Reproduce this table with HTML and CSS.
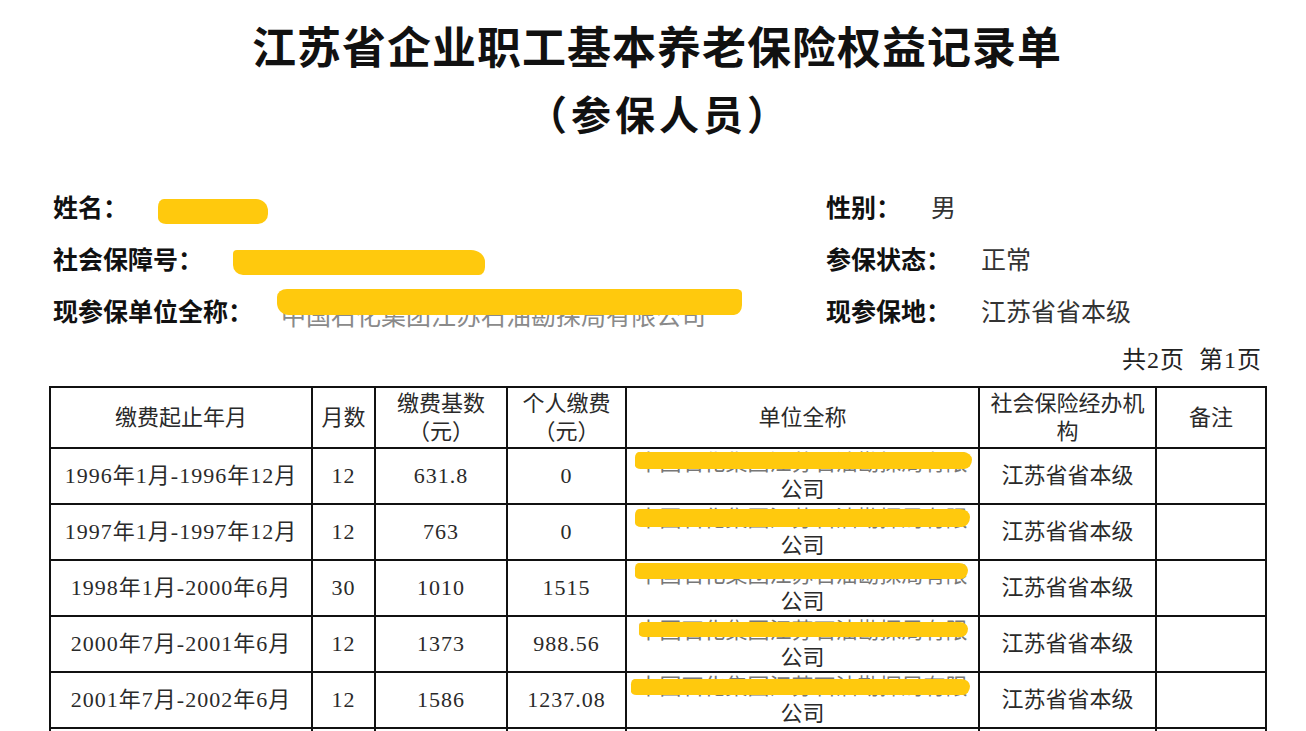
FILE: index.html
```html
<!DOCTYPE html>
<html lang="zh-CN">
<head>
<meta charset="utf-8">
<title>江苏省企业职工基本养老保险权益记录单</title>
<link rel="stylesheet" href="styles.css">
</head>
<body>
<div class="page">
  <h1 class="title">江苏省企业职工基本养老保险权益记录单</h1>
  <h2 class="subtitle">（参保人员）</h2>

  <div class="info">
    <div class="field"><span class="label">姓名：</span><span class="value"><span class="redact r-name"></span></span></div>
    <div class="field"><span class="label">性别：</span><span class="value">男</span></div>
    <div class="field"><span class="label">社会保障号：</span><span class="value"><span class="redact r-ssn"></span></span></div>
    <div class="field"><span class="label">参保状态：</span><span class="value">正常</span></div>
    <div class="field"><span class="label">现参保单位全称：</span><span class="value value-co"><span class="hidden-co">中国石化集团江苏石油勘探局有限公司</span></span></div>
    <div class="field"><span class="label">现参保地：</span><span class="value">江苏省省本级</span></div>
  </div>

  <div class="pages">共2页&nbsp;&nbsp;第1页</div>

  <table class="record">
    <colgroup>
      <col class="c1"><col class="c2"><col class="c3"><col class="c4"><col class="c5"><col class="c6"><col class="c7">
    </colgroup>
    <thead>
      <tr>
        <th>缴费起止年月</th>
        <th>月数</th>
        <th>缴费基数<br>（元）</th>
        <th>个人缴费<br>（元）</th>
        <th>单位全称</th>
        <th>社会保险经办机构</th>
        <th>备注</th>
      </tr>
    </thead>
    <tbody>
      <tr>
        <td class="num">1996年1月-1996年12月</td>
        <td class="num">12</td>
        <td class="num">631.8</td>
        <td class="num">0</td>
        <td class="co"><div class="co-line m1">中国石化集团江苏石油勘探局有限</div><div>公司</div></td>
        <td>江苏省省本级</td>
        <td></td>
      </tr>
      <tr>
        <td class="num">1997年1月-1997年12月</td>
        <td class="num">12</td>
        <td class="num">763</td>
        <td class="num">0</td>
        <td class="co"><div class="co-line m2">中国石化集团江苏石油勘探局有限</div><div>公司</div></td>
        <td>江苏省省本级</td>
        <td></td>
      </tr>
      <tr>
        <td class="num">1998年1月-2000年6月</td>
        <td class="num">30</td>
        <td class="num">1010</td>
        <td class="num">1515</td>
        <td class="co"><div class="co-line m3">中国石化集团江苏石油勘探局有限</div><div>公司</div></td>
        <td>江苏省省本级</td>
        <td></td>
      </tr>
      <tr>
        <td class="num">2000年7月-2001年6月</td>
        <td class="num">12</td>
        <td class="num">1373</td>
        <td class="num">988.56</td>
        <td class="co"><div class="co-line m4">中国石化集团江苏石油勘探局有限</div><div>公司</div></td>
        <td>江苏省省本级</td>
        <td></td>
      </tr>
      <tr>
        <td class="num">2001年7月-2002年6月</td>
        <td class="num">12</td>
        <td class="num">1586</td>
        <td class="num">1237.08</td>
        <td class="co"><div class="co-line m5">中国石化集团江苏石油勘探局有限</div><div>公司</div></td>
        <td>江苏省省本级</td>
        <td></td>
      </tr>
      <tr>
        <td class="num">2002年7月-2003年6月</td>
        <td class="num">12</td>
        <td class="num">1655</td>
        <td class="num">1323.60</td>
        <td class="co"><div class="co-line m1">中国石化集团江苏石油勘探局有限</div><div>公司</div></td>
        <td>江苏省省本级</td>
        <td></td>
      </tr>
    </tbody>
  </table>
</div>
</body>
</html>
```

FILE: styles.css
```css
* {
  box-sizing: border-box;
}

html, body {
  margin: 0;
  background: #ffffff;
}

body {
  color: #222222;
  font-family: "Liberation Serif", "Noto Sans CJK SC", serif;
  overflow: hidden;
  text-spacing-trim: space-all;
}

.page {
  width: 1306px;
  padding: 0 41px 0 49px;
}

.title {
  margin: 0;
  height: 90px;
  text-align: center;
  font: 700 44px/90px "Noto Sans CJK SC", sans-serif;
  letter-spacing: 1px;
  color: #111111;
}

.subtitle {
  margin: 0;
  height: 50px;
  text-align: center;
  font: 700 40px/46px "Noto Sans CJK SC", sans-serif;
  letter-spacing: 4px;
  padding-left: 4px;
  color: #111111;
}

.info {
  margin-top: 40px;
  padding-left: 4px;
  display: grid;
  grid-template-columns: 773px 1fr;
}

.field {
  display: flex;
  align-items: center;
  height: 52px;
  font-size: 25px;
  font-family: "Noto Sans CJK SC", sans-serif;
}

.label {
  font-weight: 700;
  color: #111111;
}

.value {
  margin-left: 30px;
  color: #333333;
  font-weight: 400;
}

.value-co {
  margin-left: 28px;
}

.redact {
  display: inline-block;
  height: 25px;
  background: #ffc90d;
  vertical-align: middle;
}

.r-name {
  width: 110px;
  border-radius: 6px 12px 10px 8px / 8px 12px 10px 6px;
  margin-top: 2px;
}

.r-ssn {
  width: 252px;
  border-radius: 4px 14px 6px 10px / 4px 12px 8px 10px;
}

.hidden-co {
  position: relative;
  display: inline-block;
  color: #8a8a8a;
  line-height: 34px;
  padding-top: 8px;
}

.hidden-co::after {
  content: "";
  position: absolute;
  left: -4px;
  right: -36px;
  top: 0;
  height: 26px;
  background: #ffc90d;
  border-radius: 10px 6px 8px 12px / 8px 4px 10px 12px;
}

.pages {
  height: 50px;
  line-height: 48px;
  text-align: right;
  padding-right: 3px;
  font-size: 24px;
  letter-spacing: 1px;
  color: #222222;
}

.record {
  border-collapse: collapse;
  table-layout: fixed;
  width: 1216px;
  font-size: 22px;
  color: #2a2a2a;
}

.c1 { width: 262px; }
.c2 { width: 63px; }
.c3 { width: 132px; }
.c4 { width: 119px; }
.c5 { width: 353px; }
.c6 { width: 177px; }
.c7 { width: 110px; }

.record th,
.record td {
  border: 2px solid #111111;
  text-align: center;
  vertical-align: middle;
  padding: 0 8px;
  font-weight: 400;
  line-height: 28px;
}

.record thead tr {
  height: 61px;
}

.record tbody tr {
  height: 55.6px;
}

.record td.num {
  letter-spacing: 1px;
  padding: 0 4px;
}

.record td.co {
  line-height: 27px;
  padding: 0 10px;
}

.co-line {
  position: relative;
  white-space: nowrap;
  color: #777777;
}

.co-line::after {
  content: "";
  position: absolute;
  left: -2px;
  right: -4px;
  top: 3px;
  height: 17px;
  background: #ffc90d;
  border-radius: 4px 10px 8px 6px / 6px 8px 10px 4px;
}

.co-line.m2::after {
  top: 4px;
  height: 18px;
  right: -2px;
}

.co-line.m3::after {
  top: 2px;
  height: 16px;
  right: 0;
}

.co-line.m4::after {
  top: 5px;
  height: 15px;
  left: 2px;
  right: 0;
}

.co-line.m5::after {
  top: 6px;
  height: 16px;
  left: -6px;
  right: -2px;
}
```
